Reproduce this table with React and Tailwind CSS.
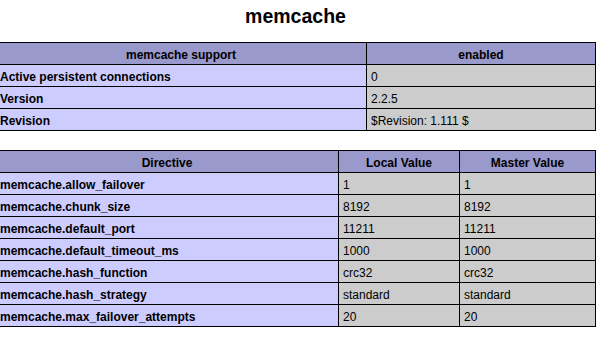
const support = [
  ["Active persistent connections", "0"],
  ["Version", "2.2.5"],
  ["Revision", "$Revision: 1.111 $"],
];

const directives = [
  ["memcache.allow_failover", "1", "1"],
  ["memcache.chunk_size", "8192", "8192"],
  ["memcache.default_port", "11211", "11211"],
  ["memcache.default_timeout_ms", "1000", "1000"],
  ["memcache.hash_function", "crc32", "crc32"],
  ["memcache.hash_strategy", "standard", "standard"],
  ["memcache.max_failover_attempts", "20", "20"],
];

const cell = "border border-black h-[22px] px-[4px] pt-[5px] pb-0 align-top leading-[14px] text-[12px]";

export default function App() {
  return (
    <div className="min-h-screen bg-white text-black font-['Liberation_Sans',Arial,sans-serif] overflow-hidden">
      <h1 className="pt-[2px] pr-[11px] text-center text-[19.5px] leading-[28px] font-bold">memcache</h1>

      {/* memcache support */}
      <table className="mt-[12px] ml-[-5px] w-[601px] table-fixed border-collapse">
        <colgroup>
          <col className="w-[371px]" />
          <col />
        </colgroup>
        <thead>
          <tr className="bg-[#9999cc]">
            <th className={`${cell} text-center font-bold`}>memcache support</th>
            <th className={`${cell} text-center font-bold`}>enabled</th>
          </tr>
        </thead>
        <tbody>
          {support.map(([k, v]) => (
            <tr key={k}>
              <td className={`${cell} bg-[#ccccff] font-bold text-left`}>{k}</td>
              <td className={`${cell} bg-[#cccccc] text-left`}>{v}</td>
            </tr>
          ))}
        </tbody>
      </table>

      {/* directives */}
      <table className="mt-[19px] ml-[-5px] w-[601px] table-fixed border-collapse">
        <colgroup>
          <col className="w-[343px]" />
          <col className="w-[121px]" />
          <col />
        </colgroup>
        <thead>
          <tr className="bg-[#9999cc]">
            <th className={`${cell} text-center font-bold`}>Directive</th>
            <th className={`${cell} text-center font-bold`}>Local Value</th>
            <th className={`${cell} text-center font-bold`}>Master Value</th>
          </tr>
        </thead>
        <tbody>
          {directives.map(([k, local, master]) => (
            <tr key={k}>
              <td className={`${cell} bg-[#ccccff] font-bold text-left`}>{k}</td>
              <td className={`${cell} bg-[#cccccc] text-left`}>{local}</td>
              <td className={`${cell} bg-[#cccccc] text-left`}>{master}</td>
            </tr>
          ))}
        </tbody>
      </table>
    </div>
  );
}
